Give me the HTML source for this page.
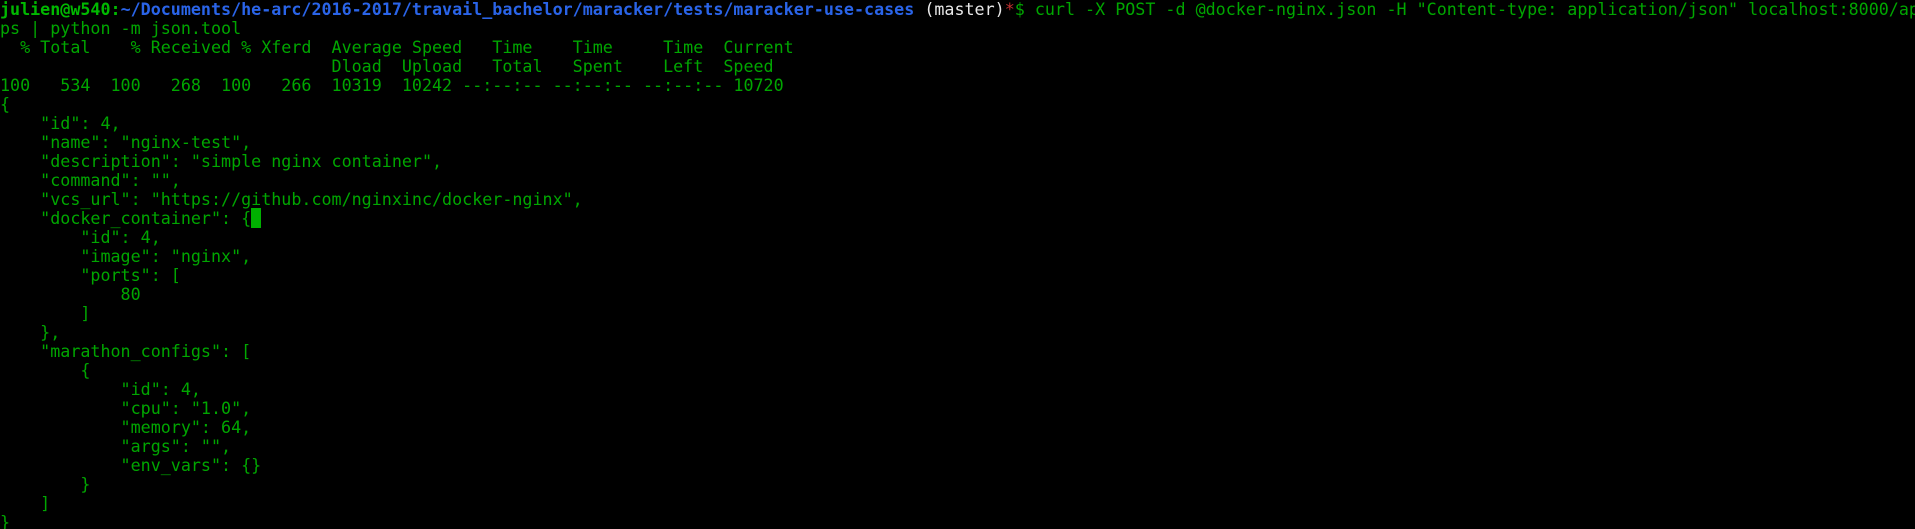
<!DOCTYPE html>
<html><head><meta charset="utf-8"><style>
html,body{margin:0;padding:0;background:#000;width:1915px;height:529px;overflow:hidden}
pre{margin:0;font-family:"DejaVu Sans Mono","Liberation Mono",monospace;font-size:16.7px;line-height:19px;color:#00a600;white-space:pre}
.g{color:#00b800;font-weight:bold}.b{color:#2a64e8;font-weight:bold}.w{color:#e8e8e8}
.c{background:#00b000;color:#00b000}
</style></head><body><pre><span class="g">julien@w540</span><span class="g">:</span><span class="b">~/Documents/he-arc/2016-2017/travail_bachelor/maracker/tests/maracker-use-cases</span> <span class="w">(master)</span><span style="color:#c03030">*</span>$ curl -X POST -d @docker-nginx.json -H "Content-type: application/json" localhost:8000/ap
ps | python -m json.tool
  % Total    % Received % Xferd  Average Speed   Time    Time     Time  Current
                                 Dload  Upload   Total   Spent    Left  Speed
100   534  100   268  100   266  10319  10242 --:--:-- --:--:-- --:--:-- 10720
{
    "id": 4,
    "name": "nginx-test",
    "description": "simple nginx container",
    "command": "",
    "vcs_url": "https://github.com/nginxinc/docker-nginx",
    "docker_container": {<span class="c"> </span>
        "id": 4,
        "image": "nginx",
        "ports": [
            80
        ]
    },
    "marathon_configs": [
        {
            "id": 4,
            "cpu": "1.0",
            "memory": 64,
            "args": "",
            "env_vars": {}
        }
    ]
}</pre></body></html>
